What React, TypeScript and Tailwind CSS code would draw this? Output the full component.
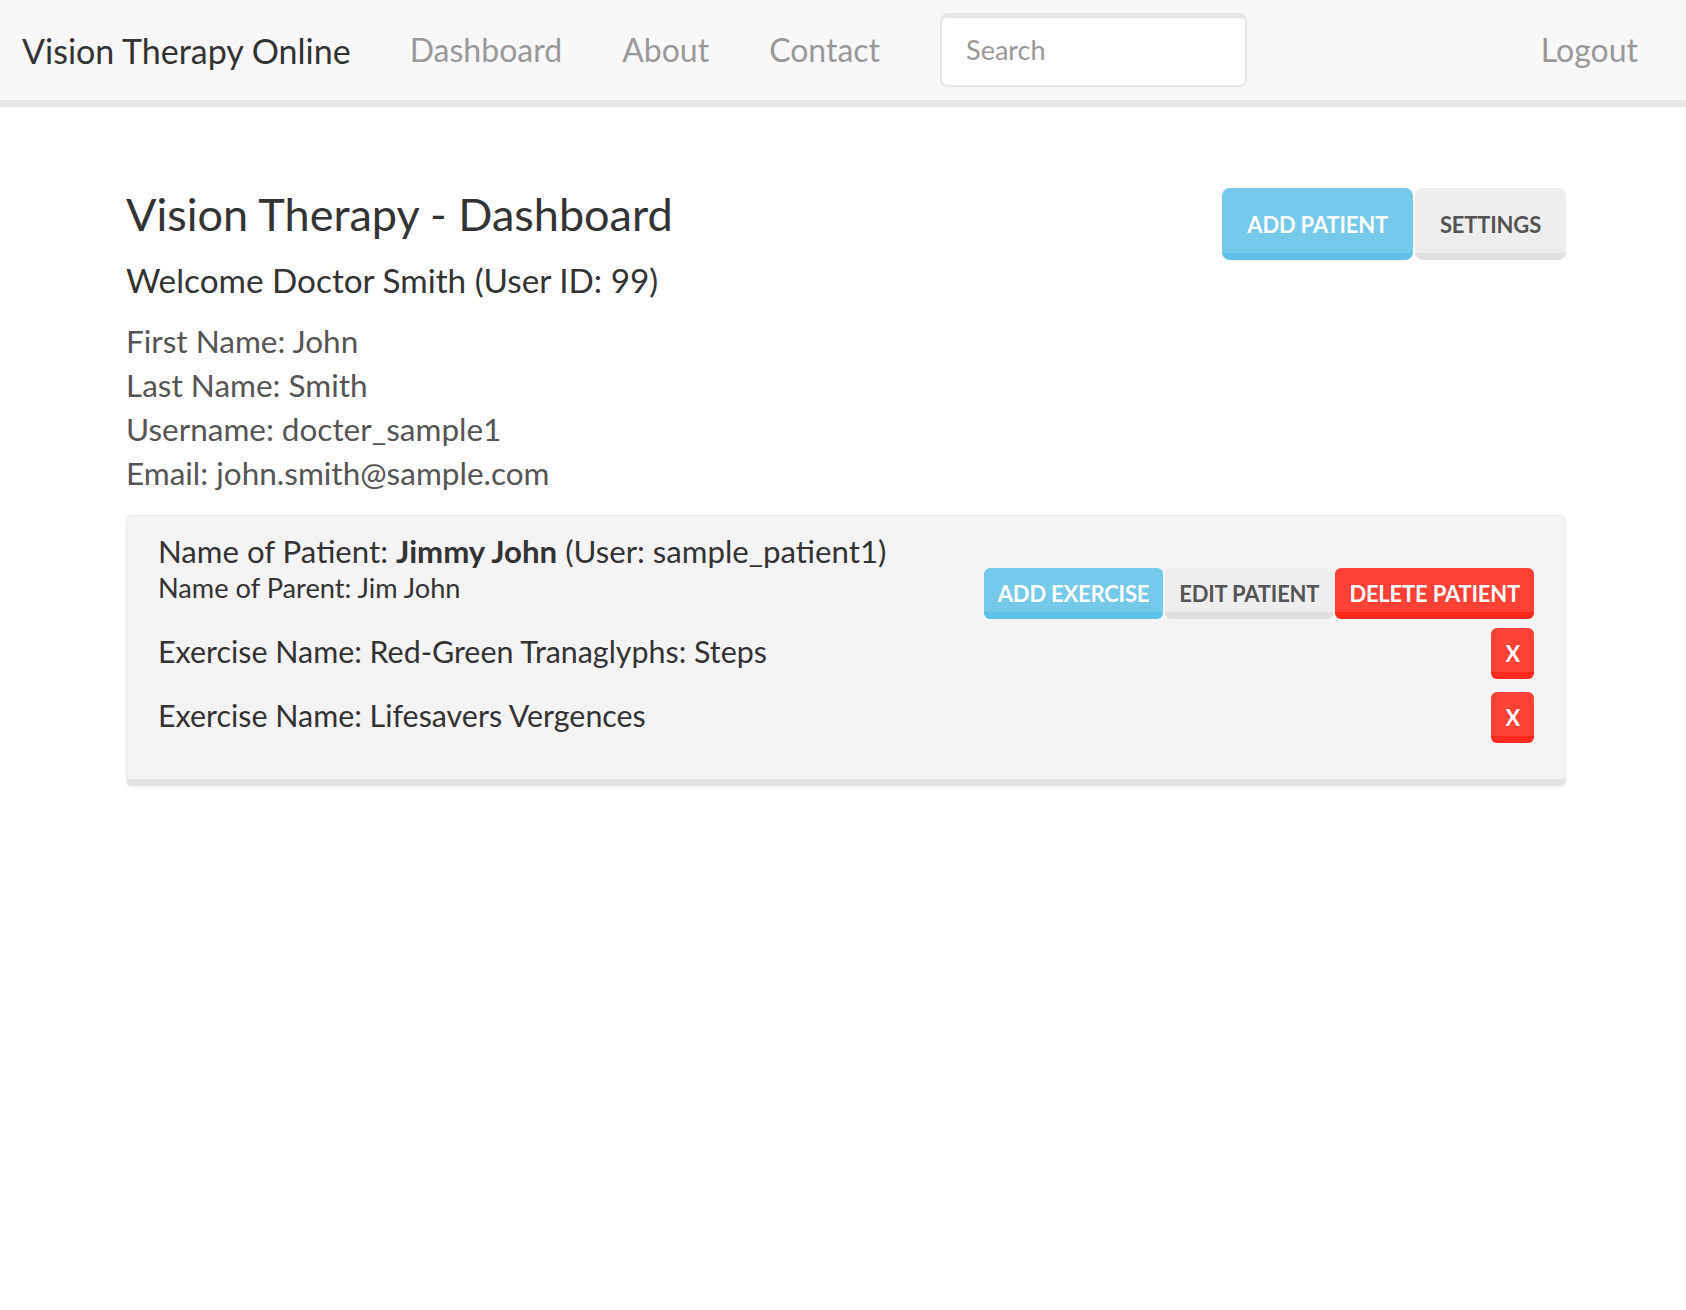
import React from "react";

const exercises = [
  "Red-Green Tranaglyphs: Steps",
  "Lifesavers Vergences",
];

const Btn: React.FC<{ kind: "info" | "default" | "danger"; big?: boolean; children: React.ReactNode }> = ({
  kind,
  big,
  children,
}) => {
  const colors =
    kind === "info"
      ? "bg-[#75caeb] border-[#5fc1e8] text-white"
      : kind === "danger"
      ? "bg-[#ff4136] border-[#ff2a1d] text-white"
      : "bg-[#eeeeee] border-[#e0e0e0] text-[#555555]";
  const size = big ? "h-[72px] px-[25px] rounded-[8px]" : "h-[51px] px-[14px] rounded-[6px]";
  return (
    <button
      className={`${colors} ${size} flex items-center justify-center border-b-[7px] pt-[7px] font-bold uppercase text-[22px] tracking-[-0.2px]`}
    >
      {children}
    </button>
  );
};

export default function App() {
  return (
    <div className="min-h-[1310px] bg-white font-['Lato',sans-serif] text-[#333333]">
      {/* Navbar */}
      <nav className="flex h-[107px] items-center border-b-[7px] border-[#e7e7e7] bg-[#f8f8f8] pl-[22px] pr-[48px]">
        <span className="text-[34px] text-[#333333]">Vision Therapy Online</span>
        <div className="ml-[59px] flex gap-[60px] text-[32px] text-[#999999]">
          <span>Dashboard</span>
          <span>About</span>
          <span>Contact</span>
        </div>
        <div className="ml-[60px] flex h-[74px] w-[307px] items-center rounded-[8px] border-2 border-t-[5px] border-[#e7e7e7] bg-white pl-[24px] pb-[3px] text-[27px] text-[#999999]">
          Search
        </div>
        <span className="ml-auto text-[32px] text-[#999999]">Logout</span>
      </nav>

      {/* Page */}
      <main className="ml-[126px] w-[1440px] pt-[77px]">
        <div className="flex items-start justify-between">
          <div>
            <h2 className="text-[45px] leading-[60px] text-[#333333]">Vision Therapy - Dashboard</h2>
            <h4 className="mt-[14px] text-[33.3px] leading-[44px] text-[#333333]">
              Welcome Doctor Smith (User ID: 99)
            </h4>
          </div>
          <div className="mt-[4px] flex gap-[2px]">
            <Btn kind="info" big>
              Add Patient
            </Btn>
            <Btn kind="default" big>
              Settings
            </Btn>
          </div>
        </div>

        <div className="mt-[17px] text-[31.5px] leading-[44px] text-[#555555]">
          <p>First Name: John</p>
          <p>Last Name: Smith</p>
          <p>Username: docter_sample1</p>
          <p>Email: john.smith@sample.com</p>
        </div>

        {/* Patient well */}
        <div className="mt-[20px] rounded-[6px] border border-b-[7px] border-[#ececec] border-b-[#e4e4e4] bg-[#f4f4f4] px-[31px] pt-[15px] pb-[36px] shadow-[0_1px_3px_rgba(0,0,0,0.08)]">
          <div className="flex items-start justify-between">
            <div>
              <p className="text-[31.2px] leading-[40px]">
                Name of Patient: <b>Jimmy John</b> (User: sample_patient1)
              </p>
              <p className="text-[27.2px] leading-[34px]">Name of Parent: Jim John</p>
            </div>
            <div className="mt-[37px] flex gap-[2px]">
              <Btn kind="info">Add Exercise</Btn>
              <Btn kind="default">Edit Patient</Btn>
              <Btn kind="danger">Delete Patient</Btn>
            </div>
          </div>
          <div className="mt-[9px] flex flex-col gap-[13px]">
            {exercises.map((name) => (
              <div key={name} className="flex h-[51px] items-center justify-between">
                <p className="pb-[4px] text-[30.4px]">Exercise Name: {name}</p>
                <Btn kind="danger">X</Btn>
              </div>
            ))}
          </div>
        </div>
      </main>
    </div>
  );
}
